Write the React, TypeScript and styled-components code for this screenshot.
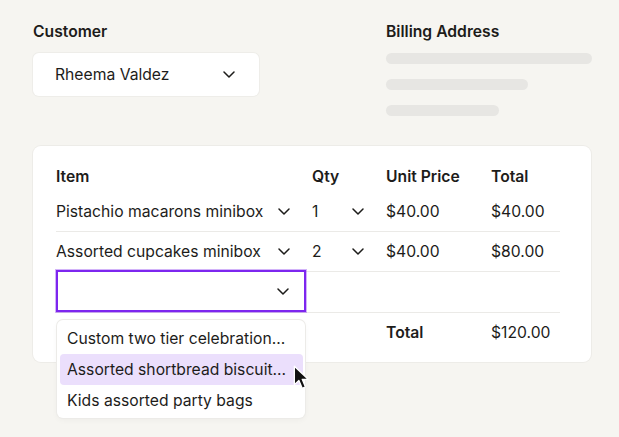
import React from 'react';
import styled, { createGlobalStyle } from 'styled-components';

const GlobalStyle = createGlobalStyle`
  body {
    margin: 0;
    background: #f6f5f1;
    font-family: Inter, 'Noto Sans', sans-serif;
    color: #1d1c1a;
  }
`;

const Page = styled.div`
  box-sizing: border-box;
  min-height: 100vh;
  width: 619px;
  padding: 23px 28px 0 33px;
`;

const TopRow = styled.div`
  display: grid;
  grid-template-columns: 353px 1fr;
`;

const Field = styled.div`
  display: flex;
  flex-direction: column;
  gap: 12px;
`;

const Label = styled.div`
  font-size: 15.7px;
  font-weight: 600;
  line-height: 18px;
`;

const SelectBox = styled.div`
  width: 226px;
  height: 43px;
  box-sizing: border-box;
  display: flex;
  align-items: center;
  justify-content: space-between;
  padding: 0 24px 0 22px;
  background: #ffffff;
  border-radius: 6px;
  box-shadow: 0 0 0 1px #eeede9;
  font-size: 15.7px;
`;

const Bars = styled.div`
  display: flex;
  flex-direction: column;
  gap: 15px;
`;

const Bar = styled.div<{ $w: number }>`
  width: ${(p) => p.$w}px;
  height: 11px;
  border-radius: 6px;
  background: #e7e6e3;
`;

const Card = styled.div`
  position: relative;
  margin-top: 30px;
  background: #ffffff;
  border-radius: 8px;
  box-shadow: 0 0 0 1px #edece8;
  padding: 14px 31px 10px 23px;
`;

const Table = styled.div`
  display: grid;
  grid-template-columns: 256px 74px 105px 1fr;
  font-size: 15.7px;
`;

const Row = styled.div<{ $h: number; $line?: boolean }>`
  display: contents;
  & > * {
    height: ${(p) => p.$h}px;
    border-bottom: ${(p) => (p.$line ? '1px solid #ebeae7' : 'none')};
  }
`;

const Cell = styled.div<{ $bold?: boolean }>`
  display: flex;
  align-items: center;
  font-weight: ${(p) => (p.$bold ? 600 : 400)};
`;

const PickerCell = styled(Cell)`
  justify-content: space-between;
  padding-right: 22px;
`;

const ActiveCell = styled(Cell)`
  position: relative;
  z-index: 3;
`;

const ActiveSelect = styled.div`
  position: absolute;
  left: 0;
  top: -2px;
  width: 250px;
  height: 42px;
  box-sizing: border-box;
  border: 2px solid #7d26ef;
  box-shadow: 0 0 0 1px rgba(125, 38, 239, 0.35);
  background: #ffffff;
  display: flex;
  align-items: center;
  justify-content: flex-end;
  padding-right: 15px;
`;

const Menu = styled.div`
  position: absolute;
  left: 1px;
  top: 48px;
  width: 248px;
  box-sizing: border-box;
  padding: 3px 2px 2px 3px;
  background: #ffffff;
  border-radius: 6px;
  box-shadow: 0 0 0 1px #ecebe8, 0 2px 6px rgba(0, 0, 0, 0.04);
`;

const Option = styled.div<{ $active?: boolean }>`
  height: 31px;
  display: flex;
  align-items: center;
  padding-left: 7px;
  border-radius: 4px;
  background: ${(p) => (p.$active ? '#ebdffc' : 'transparent')};
  white-space: nowrap;
`;

const Pointer = styled.svg`
  position: absolute;
  left: 236px;
  top: 45px;
`;

const Chevron = () => (
  <svg width="12" height="7" viewBox="0 0 12 7" fill="none">
    <polyline
      points="1,1 6,6 11,1"
      stroke="#1d1c1a"
      strokeWidth="1.5"
      strokeLinecap="round"
      strokeLinejoin="round"
    />
  </svg>
);

const lines = [
  { item: 'Pistachio macarons minibox', qty: 1, price: '$40.00', total: '$40.00' },
  { item: 'Assorted cupcakes minibox', qty: 2, price: '$40.00', total: '$80.00' },
];

const options = [
  'Custom two tier celebration...',
  'Assorted shortbread biscuit...',
  'Kids assorted party bags',
];

export default function App() {
  return (
    <>
      <GlobalStyle />
      <Page>
        <TopRow>
          <Field>
            <Label>Customer</Label>
            <SelectBox>
              Rheema Valdez
              <Chevron />
            </SelectBox>
          </Field>
          <Field>
            <Label>Billing Address</Label>
            <Bars>
              <Bar $w={206} />
              <Bar $w={142} />
              <Bar $w={113} />
            </Bars>
          </Field>
        </TopRow>

        <Card>
          <Table>
            <Row $h={32}>
              <Cell $bold>Item</Cell>
              <Cell $bold>Qty</Cell>
              <Cell $bold>Unit Price</Cell>
              <Cell $bold>Total</Cell>
            </Row>
            {lines.map((l) => (
              <Row key={l.item} $h={39} $line>
                <PickerCell>
                  {l.item}
                  <Chevron />
                </PickerCell>
                <PickerCell>
                  {l.qty}
                  <Chevron />
                </PickerCell>
                <Cell>{l.price}</Cell>
                <Cell>{l.total}</Cell>
              </Row>
            ))}
            <Row $h={40} $line>
              <ActiveCell>
                <ActiveSelect>
                  <Chevron />
                </ActiveSelect>
                <Menu>
                  {options.map((o, i) => (
                    <Option key={o} $active={i === 1}>
                      {o}
                    </Option>
                  ))}
                  <Pointer width="17" height="25" viewBox="0 0 14 21">
                    <path
                      d="M1 1 L1 16.5 L4.8 13 L7.6 19.6 L10.3 18.4 L7.6 12 L12.6 12 Z"
                      fill="#111"
                      stroke="#fff"
                      strokeWidth="1.1"
                      strokeLinejoin="round"
                    />
                  </Pointer>
                </Menu>
              </ActiveCell>
              <Cell />
              <Cell />
              <Cell />
            </Row>
            <Row $h={39}>
              <Cell />
              <Cell />
              <Cell $bold>Total</Cell>
              <Cell>$120.00</Cell>
            </Row>
          </Table>
        </Card>
      </Page>
    </>
  );
}
